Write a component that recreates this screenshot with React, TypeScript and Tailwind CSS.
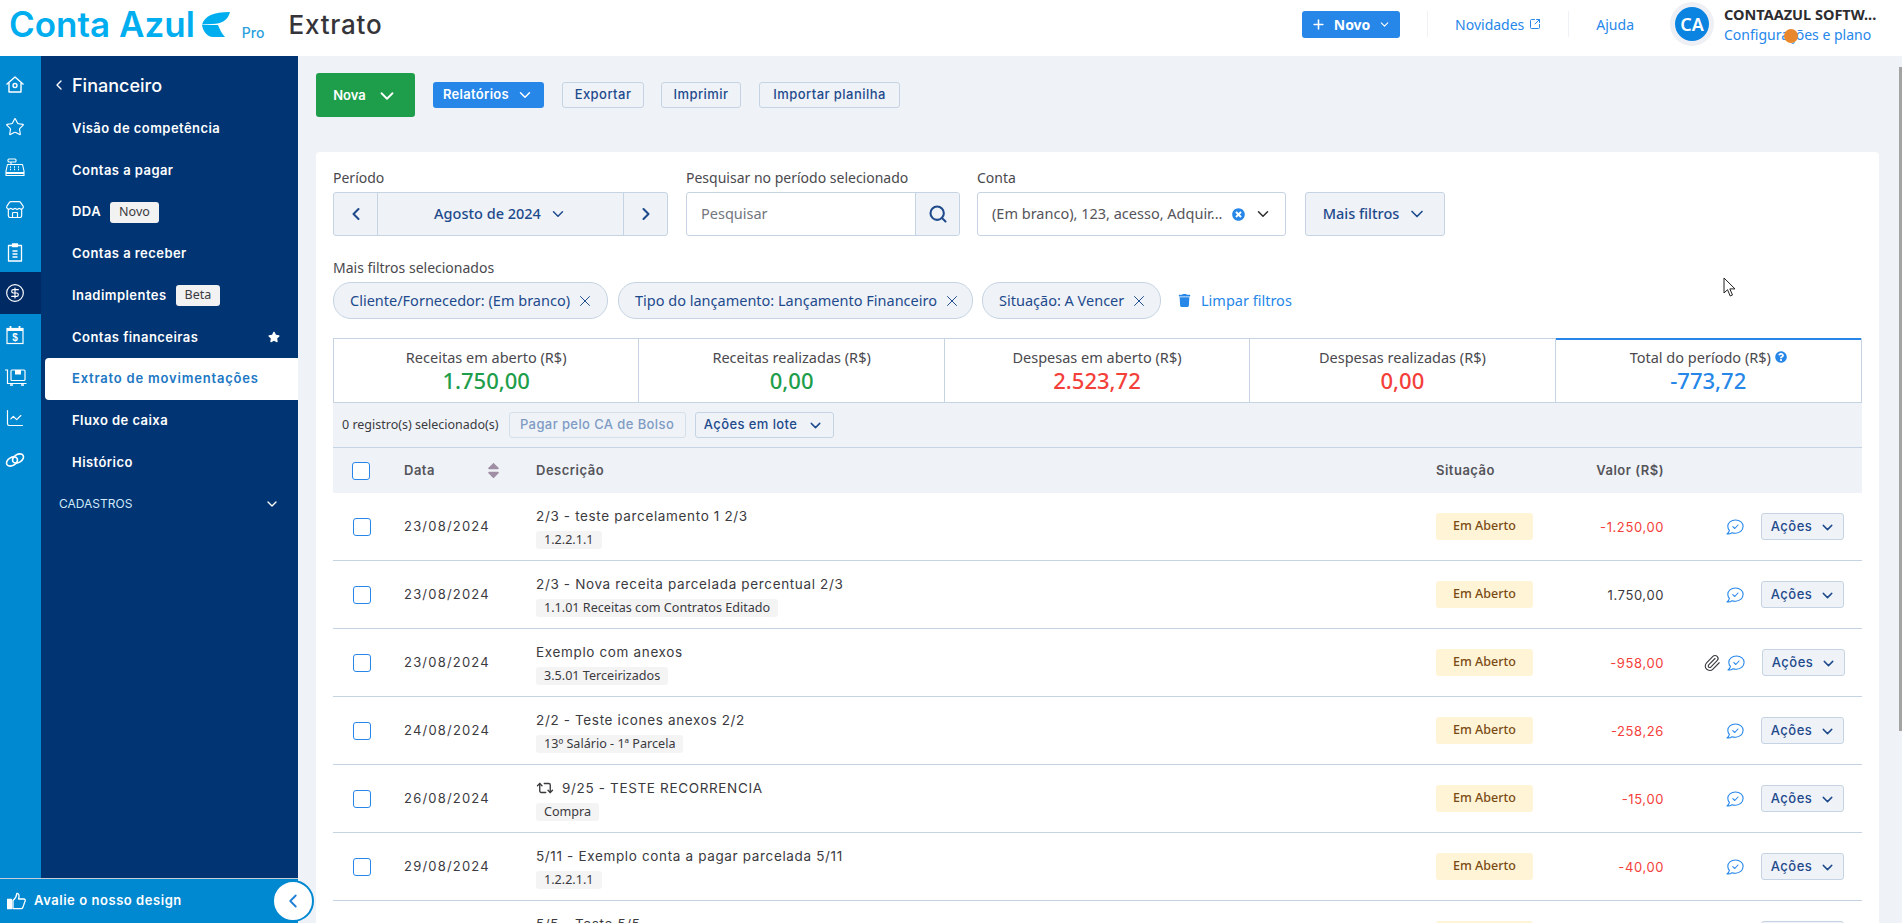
import React from 'react';
import {
  ChevronDown,
  ChevronLeft,
  ChevronRight,
  Search,
  X,
  Plus,
  Paperclip,
  Repeat2,
  SquareArrowOutUpRight,
  Star,
  CircleDollarSign,
  Store,
  ChartLine,
} from 'lucide-react';
import { FaStar, FaTrash, FaQuestionCircle, FaTimesCircle, FaSort } from 'react-icons/fa';

function HomeIcon() {
  return (
    <svg width="20" height="20" viewBox="0 0 20 20" fill="none" stroke="currentColor" strokeWidth="1.4" strokeLinejoin="round">
      <path d="M1.5 9.5 10 2l8.500 7.500" />
      <path d="M4 8v9h12V8" />
      <circle cx="10" cy="10.500" r="2" />
    </svg>
  );
}

function RegisterIcon() {
  return (
    <svg width="20" height="20" viewBox="0 0 20 20" fill="none" stroke="currentColor" strokeWidth="1.100" strokeLinejoin="round">
      <rect x="3" y="1" width="8" height="3" rx="1" />
      <path d="M6 4v2M2.500 6.500h15L19 13v4.500H1V13z" />
      <path d="M1 15h18" strokeWidth="2" />
      <path d="M5 9h1M9 9h1M13 9h1M5 11.500h1M9 11.500h1M13 11.500h1" strokeWidth="1.300" />
    </svg>
  );
}

function ClipboardIcon() {
  return (
    <svg width="20" height="20" viewBox="0 0 20 20" fill="none" stroke="currentColor" strokeWidth="1.300" strokeLinejoin="round">
      <path d="M7 3.500H3.500V19h13V3.500H13" />
      <path d="M7.500 2h5v2.500h-5z" fill="currentColor" />
      <path d="M7.500 9h5M7.500 12h5M7.500 15h5" />
    </svg>
  );
}

function CalendarMoneyIcon() {
  return (
    <svg width="20" height="20" viewBox="0 0 20 20" fill="none" stroke="currentColor" strokeWidth="1.200">
      <rect x="2" y="3.500" width="16" height="15" />
      <path d="M5.500 1v4M14.500 1v4M2 5h16" strokeWidth="1.800" />
      <text x="10" y="16" fontSize="10" fontWeight="700" textAnchor="middle" fill="currentColor" stroke="none" fontFamily="Liberation Sans, sans-serif">$</text>
    </svg>
  );
}

function CartIcon() {
  return (
    <svg width="22" height="20" viewBox="0 0 22 20" fill="none" stroke="currentColor" strokeWidth="1.200">
      <path d="M0 3h2.500v13.500h19" />
      <rect x="6" y="3" width="14" height="10.500" rx="1" />
      <path d="M10 3h6v4.500h-6z" fill="currentColor" stroke="none" />
      <path d="M5 18h3M16 18h3" strokeWidth="1.600" />
    </svg>
  );
}

function LinkIcon() {
  return (
    <svg width="20" height="20" viewBox="0 0 20 20" fill="none" stroke="currentColor" strokeWidth="1.600">
      <ellipse cx="7" cy="11.500" rx="6" ry="4" transform="rotate(-32 7 11.500)" />
      <ellipse cx="13" cy="8.500" rx="6" ry="4" transform="rotate(-32 13 8.500)" />
    </svg>
  );
}

function ThumbIcon() {
  return (
    <svg width="19" height="18" viewBox="0 0 19 18" fill="none" stroke="currentColor" strokeWidth="1.300" strokeLinejoin="round">
      <rect x="0.500" y="7.500" width="4" height="9" fill="currentColor" />
      <path d="M6 8.500c2-1.500 3.500-4 3.800-7 2-.4 2.800 2 1.700 5.500h5.300c1.300 0 1.800 1.300 1.200 2.300l-2.200 6.300c-.3.800-.9 1.100-1.700 1.100H6z" />
    </svg>
  );
}

function ChatCheck() {
  return (
    <svg width="18" height="16" viewBox="0 0 18 16" fill="none" stroke="#2687e9" strokeWidth="1.100" strokeLinejoin="round" strokeLinecap="round">
      <path d="M9.500 1C5 1 1.800 3.800 1.800 7.300c0 1.500.6 2.900 1.600 4-.2 1.400-1 2.700-2.400 3.600 2 .3 3.700-.2 5-1.200 1.100.4 2.300.6 3.500.5 4.400-.1 7.600-3 7.600-6.900C17.100 3.800 13.900 1 9.500 1z" />
      <path d="m6.800 7.600 2 1.900 3.200-3.500" />
    </svg>
  );
}

function Cursor() {
  return (
    <svg width="14" height="20" viewBox="0 0 14 20" className="absolute left-[1723px] top-[277px]">
      <path d="M1 1v15l3.500-3.300 2.700 6.300 2.300-1-2.700-6.100H12z" fill="#fff" stroke="#222" strokeWidth="1" strokeLinejoin="round" />
    </svg>
  );
}

function Sidebar() {
  const rail = [
    { icon: <HomeIcon /> },
    { icon: <Star size={20} strokeWidth={1.4} /> },
    { icon: <RegisterIcon /> },
    { icon: <Store size={20} strokeWidth={1.4} /> },
    { icon: <ClipboardIcon /> },
    { icon: <CircleDollarSign size={20} strokeWidth={1.4} />, active: true },
    { icon: <CalendarMoneyIcon /> },
    { icon: <CartIcon /> },
    { icon: <ChartLine size={20} strokeWidth={1.4} /> },
    { icon: <LinkIcon /> },
  ];

  return (
    <div className="relative flex w-[298px] shrink-0 flex-col">
      <div className="flex min-h-0 flex-1">
        <div className="flex w-[41px] shrink-0 flex-col bg-[#0088d1] pt-[8px] text-white">
          {rail.map((item, i) => (
            <div key={i} className={item.active ? 'flex h-[41.7px] items-center bg-[#002a63] pl-[5px]' : 'flex h-[41.7px] items-center pl-[5px]'}>
              {item.icon}
            </div>
          ))}
        </div>
        <div className="flex-1 bg-[#003473] pl-[4px] font-['Inter',sans-serif] text-[13px] font-semibold tracking-[0.45px] text-white">
          <div className="flex h-[52px] items-center pl-[6px] pt-[6px]">
            <ChevronLeft size={16} strokeWidth={2} />
            <span className="ml-[5px] text-[18px] font-medium tracking-[0px]">Financeiro</span>
          </div>
          <div className="flex h-[41.7px] items-center pl-[27px]">Visão de competência</div>
          <div className="flex h-[41.7px] items-center pl-[27px]">Contas a pagar</div>
          <div className="flex h-[41.7px] items-center pl-[27px]">
            DDA
            <span className="ml-[9px] rounded-[3px] bg-[#f2f2f2] px-[9px] py-[1px] font-['Noto_Sans',sans-serif] text-[12.500px] font-normal tracking-normal text-[#3b3a3e]">Novo</span>
          </div>
          <div className="flex h-[41.7px] items-center pl-[27px]">Contas a receber</div>
          <div className="flex h-[41.7px] items-center pl-[27px]">
            Inadimplentes
            <span className="ml-[9px] rounded-[3px] bg-[#f2f2f2] px-[9px] py-[1px] font-['Noto_Sans',sans-serif] text-[12.500px] font-normal tracking-normal text-[#3b3a3e]">Beta</span>
          </div>
          <div className="flex h-[41.7px] items-center justify-between pl-[27px] pr-[18px]">
            Contas financeiras
            <FaStar size={12} />
          </div>
          <div className="flex h-[41.7px] items-center rounded-l-[4px] bg-white pl-[27px] tracking-[0.8px] text-[#2077c4]">Extrato de movimentações</div>
          <div className="flex h-[41.7px] items-center pl-[27px]">Fluxo de caixa</div>
          <div className="flex h-[41.7px] items-center pl-[27px]">Histórico</div>
          <div className="flex h-[41.7px] items-center justify-between pl-[14px] pr-[18px] text-[12px] font-normal tracking-[0px] text-[#cfe8fa]">
            CADASTROS
            <ChevronDown size={16} className="text-white" />
          </div>
        </div>
      </div>
      <div className="flex h-[45px] shrink-0 items-center gap-[8px] border-t border-[#c9ced6] bg-[#0088d1] pl-[7px] font-['Inter',sans-serif] text-[13px] font-semibold tracking-[0.55px] text-white">
        <ThumbIcon />
        Avalie o nosso design
      </div>
      <div className="absolute bottom-[1px] right-[-16px] flex h-[42px] w-[42px] items-center justify-center rounded-full border-2 border-[#0088d1] bg-white text-[#1f7fd6]">
        <ChevronLeft size={22} strokeWidth={2} />
      </div>
    </div>
  );
}

function Header() {
  return (
    <header className="flex h-14 shrink-0 items-center bg-white pb-[8px] pl-[9px]">
      <span className="font-['Inter',sans-serif] text-[35px] font-semibold leading-none tracking-[0px] text-[#00aeef]">Conta Azul</span>
      <svg width="28" height="25" viewBox="0 0 28 25" fill="#00aeef" className="ml-[7px]">
        <path d="M0 12.500C3 4 11 0 28 0c-2 8-8 12-18 12z" />
        <path d="M0 13h16c2 5 4 9 7 12H11C5 25 1 19 0 13z" />
      </svg>
      <span className="ml-[12px] mt-[17px] font-['Inter',sans-serif] text-[14px] font-medium text-[#2a9fdc]">Pro</span>
      <span className="ml-[24px] font-['Inter',sans-serif] text-[26px] font-medium tracking-[0.8px] text-[#353439]">Extrato</span>
      <div className="ml-auto flex items-center pr-[30px]">
        <button className="flex h-[27px] w-[98px] items-center justify-center gap-[8px] rounded-[3px] bg-[#2687e9] text-[14px] font-bold text-white">
          <Plus size={15} strokeWidth={2.5} />
          Novo
          <ChevronDown size={13} />
        </button>
        <div className="ml-[27px] h-[26px] w-px bg-[#eef1f6]" />
        <span className="ml-[27px] text-[14px] text-[#2687e9]">Novidades</span>
        <SquareArrowOutUpRight size={12} strokeWidth={2} className="ml-[5px] text-[#2687e9]" />
        <div className="ml-[27px] h-[26px] w-px bg-[#eef1f6]" />
        <span className="ml-[27px] text-[14px] text-[#2687e9]">Ajuda</span>
        <div className="ml-[36px] flex h-[44px] w-[44px] items-center justify-center rounded-full bg-[#eef0f5]">
          <div className="flex h-[34px] w-[34px] items-center justify-center rounded-full bg-[#0a84e0] text-[18px] font-semibold text-white">CA</div>
        </div>
        <div className="relative ml-[10px] flex w-[148px] flex-col gap-[5px] leading-[16px]">
          <span className="whitespace-nowrap text-[14.500px] font-bold text-[#2d2c30]">CONTAAZUL SOFTW...</span>
          <span className="whitespace-nowrap text-[14px] text-[#2687e9]">Configurações e plano</span>
          <span className="absolute left-[60px] top-[23px] h-[14px] w-[14px] rounded-full bg-[#e8872b]" />
        </div>
      </div>
    </header>
  );
}

function Toolbar() {
  const outline = "flex h-[26px] items-center rounded-[3px] border border-[#c5d3e2] bg-[#eff3f8] font-['Inter',sans-serif] text-[13px] font-medium tracking-[0.45px] text-[#1e4a8c]";
  return (
    <div className="flex h-[44px] items-center">
      <button className="mr-[18px] flex h-[44px] w-[99px] items-center justify-center gap-[10px] rounded-[3px] bg-[#1e9e4a] pt-[1px] font-['Inter',sans-serif] text-[13px] font-semibold text-white">
        Nova
        <ChevronDown size={22} strokeWidth={2} />
      </button>
      <button className="mr-[18px] flex h-[26px] w-[111px] items-center justify-center gap-[7px] rounded-[3px] bg-[#2687e9] font-['Inter',sans-serif] text-[13px] font-semibold tracking-[0.3px] text-white">
        Relatórios
        <ChevronDown size={18} />
      </button>
      <button className={outline + ' mr-[17px] w-[82px] justify-center'}>Exportar</button>
      <button className={outline + ' mr-[18px] w-[80px] justify-center'}>Imprimir</button>
      <button className={outline + ' w-[141px] justify-center'}>Importar planilha</button>
    </div>
  );
}

function Filters() {
  const chip = 'flex h-[37px] items-center gap-[6px] rounded-[18px] border border-[#c5d3e2] bg-[#eff3f8] text-[14.500px] text-[#1e4a8c]';
  return (
    <>
      <div className="flex items-end">
        <div className="mr-[18px] w-[335px]">
          <div className="mb-[6px] text-[14px] leading-[16px] text-[#4a494e]">Período</div>
          <div className="flex h-[44px] items-center rounded-[3px] border border-[#c5d3e2] bg-[#eff3f8] text-[#1e4a8c]">
            <div className="flex h-full w-[44px] items-center justify-center border-r border-[#c5d3e2]">
              <ChevronLeft size={20} strokeWidth={2.5} />
            </div>
            <div className="flex flex-1 items-center justify-center gap-[8px] text-[14.500px] font-medium">
              Agosto de 2024
              <ChevronDown size={18} strokeWidth={2} />
            </div>
            <div className="flex h-full w-[44px] items-center justify-center border-l border-[#c5d3e2]">
              <ChevronRight size={20} strokeWidth={2.5} />
            </div>
          </div>
        </div>
        <div className="mr-[17px] w-[274px]">
          <div className="mb-[6px] text-[14px] leading-[16px] text-[#4a494e]">Pesquisar no período selecionado</div>
          <div className="flex h-[44px] items-center rounded-[3px] border border-[#c5d3e2] bg-white">
            <span className="flex-1 pl-[14px] text-[14.500px] text-[#73767e]">Pesquisar</span>
            <div className="flex h-full w-[44px] items-center justify-center rounded-r-[3px] border-l border-[#c5d3e2] bg-[#eff3f8] text-[#1e4a8c]">
              <Search size={20} strokeWidth={2.5} />
            </div>
          </div>
        </div>
        <div className="mr-[19px] w-[309px]">
          <div className="mb-[6px] text-[14px] leading-[16px] text-[#4a494e]">Conta</div>
          <div className="flex h-[44px] items-center rounded-[3px] border border-[#c5d3e2] bg-white pl-[14px] pr-[13px]">
            <span className="flex-1 whitespace-nowrap text-[14.500px] text-[#55545a]">(Em branco), 123, acesso, Adquir...</span>
            <FaTimesCircle size={13} className="mr-[9px] text-[#2687e9]" />
            <ChevronDown size={18} strokeWidth={2} className="text-[#2d2c30]" />
          </div>
        </div>
        <button className="flex h-[44px] w-[140px] items-center justify-center gap-[8px] rounded-[3px] border border-[#c5d3e2] bg-[#eff3f8] text-[14.500px] font-medium text-[#1e4a8c]">
          Mais filtros
          <ChevronDown size={20} strokeWidth={2} />
        </button>
      </div>
      <div className="mb-[6px] mt-[24px] text-[14px] leading-[16px] text-[#4a494e]">Mais filtros selecionados</div>
      <div className="flex items-center">
        <div className={chip + ' mr-[10px] w-[275px] pl-[16px]'}>
          Cliente/Fornecedor: (Em branco)
          <X size={18} strokeWidth={1.3} />
        </div>
        <div className={chip + ' mr-[9px] w-[355px] pl-[16px]'}>
          Tipo do lançamento: Lançamento Financeiro
          <X size={18} strokeWidth={1.3} />
        </div>
        <div className={chip + ' mr-[17px] w-[179px] pl-[16px]'}>
          Situação: A Vencer
          <X size={18} strokeWidth={1.3} />
        </div>
        <FaTrash size={13} className="mr-[10px] text-[#2687e9]" />
        <span className="text-[14.500px] text-[#2687e9]">Limpar filtros</span>
      </div>
    </>
  );
}

function Summary() {
  const cells = [
    { label: 'Receitas em aberto (R$)', value: '1.750,00', color: 'text-[#1e9e4a]' },
    { label: 'Receitas realizadas (R$)', value: '0,00', color: 'text-[#1e9e4a]' },
    { label: 'Despesas em aberto (R$)', value: '2.523,72', color: 'text-[#f4403a]' },
    { label: 'Despesas realizadas (R$)', value: '0,00', color: 'text-[#f4403a]' },
  ];
  return (
    <div className="mt-[19px] grid h-[65px] grid-cols-5 border-b border-l border-r border-t border-[#c5d3e2]">
      {cells.map((c) => (
        <div key={c.label} className="flex flex-col items-center justify-center border-r border-[#c5d3e2]">
          <span className="text-[14.500px] leading-[18px] text-[#4a494e]">{c.label}</span>
          <span className={'text-[22px] font-medium leading-[28px] ' + c.color}>{c.value}</span>
        </div>
      ))}
      <div className="mt-[-1px] flex flex-col items-center justify-center border-t-2 border-[#2687e9]">
        <span className="flex items-center gap-[4px] text-[14.500px] leading-[18px] text-[#4a494e]">
          Total do período (R$)
          <FaQuestionCircle size={12} className="text-[#2687e9]" />
        </span>
        <span className="text-[22px] font-medium leading-[28px] text-[#2687e9]">-773,72</span>
      </div>
    </div>
  );
}

function CheckBox() {
  return <div className="h-[18px] w-[18px] rounded-[3px] border border-[#2687e9] bg-white" />;
}

function TableTop() {
  return (
    <>
      <div className="flex h-[45px] items-center border-b border-[#c5d3e2] bg-[#eff3f8] pl-[9px]">
        <span className="text-[12.500px] text-[#3b3a3e]">0 registro(s) selecionado(s)</span>
        <button className="ml-[10px] flex h-[26px] w-[177px] items-center justify-center rounded-[3px] border border-[#d5dfea] font-['Inter',sans-serif] text-[13px] font-medium tracking-[0.4px] text-[#7f9bc4]">
          Pagar pelo CA de Bolso
        </button>
        <button className="ml-[9px] flex h-[26px] w-[139px] items-center justify-center gap-[10px] rounded-[3px] border border-[#c5d3e2] font-['Inter',sans-serif] text-[13px] font-medium tracking-[0.4px] text-[#1e4a8c]">
          Ações em lote
          <ChevronDown size={17} strokeWidth={2} />
        </button>
      </div>
      <div className="flex h-[45px] items-center bg-[#eff3f8] font-['Inter',sans-serif] text-[13px] font-semibold tracking-[0.5px] text-[#55545a]">
        <div className="w-[71px] pl-[19px]">
          <CheckBox />
        </div>
        <div className="flex w-[132px] items-center">
          <span className="w-[80px]">Data</span>
          <FaSort size={19} className="text-[#a08ea4]" />
        </div>
        <div className="w-[900px]">Descrição</div>
        <div className="w-[132px]">Situação</div>
        <div className="w-[96px] text-right">Valor (R$)</div>
      </div>
    </>
  );
}

type RowData = {
  date: string;
  desc: string;
  tag: string;
  value: string;
  positive?: boolean;
  clip?: boolean;
  recurring?: boolean;
};

const rows: RowData[] = [
  { date: '23/08/2024', desc: '2/3 - teste parcelamento 1 2/3', tag: '1.2.2.1.1', value: '-1.250,00' },
  { date: '23/08/2024', desc: '2/3 - Nova receita parcelada percentual 2/3', tag: '1.1.01 Receitas com Contratos Editado', value: '1.750,00', positive: true },
  { date: '23/08/2024', desc: 'Exemplo com anexos', tag: '3.5.01 Terceirizados', value: '-958,00', clip: true },
  { date: '24/08/2024', desc: '2/2 - Teste icones anexos 2/2', tag: '13º Salário - 1ª Parcela', value: '-258,26' },
  { date: '26/08/2024', desc: '9/25 - TESTE RECORRENCIA', tag: 'Compra', value: '-15,00', recurring: true },
  { date: '29/08/2024', desc: '5/11 - Exemplo conta a pagar parcelada 5/11', tag: '1.2.2.1.1', value: '-40,00' },
  { date: '31/08/2024', desc: '5/5 - Teste 5/5', tag: '1.2.2.1.1', value: '-1,46' },
];

function Row({ row }: { row: RowData }) {
  return (
    <div className="flex h-[68px] items-center border-b border-[#c5d3e2] bg-white">
      <div className="w-[71px] pl-[20px]">
        <CheckBox />
      </div>
      <div className="w-[132px] pt-[1px] font-['Inter',sans-serif] text-[13px] tracking-[1.2px] text-[#3b3a3e]">{row.date}</div>
      <div className="w-[900px] pt-[3px]">
        <div className="flex h-[18px] items-center font-['Inter',sans-serif] text-[13.500px] tracking-[0.65px] text-[#3b3a3e]">
          {row.recurring && <Repeat2 size={18} strokeWidth={1.8} className="mr-[8px]" />}
          {row.desc}
        </div>
        <span className="mt-[6px] inline-block rounded-[3px] bg-[#f4f4f5] px-[8px] align-top text-[12.600px] leading-[18px] text-[#3b3a3e]">{row.tag}</span>
      </div>
      <div className="w-[132px]">
        <span className="flex h-[27px] w-[97px] items-center justify-center rounded-[3px] bg-[#fff5d6] text-[12.500px] font-medium text-[#7a4a14]">Em Aberto</span>
      </div>
      <div className={"w-[96px] pt-[2px] text-right font-['Inter',sans-serif] text-[13px] tracking-[0.6px] " + (row.positive ? 'text-[#3b3a3e]' : 'text-[#f4403a]')}>{row.value}</div>
      <div className="flex flex-1 items-center justify-end pr-[18px]">
        {row.clip && <Paperclip size={18} strokeWidth={1.5} className="mr-[6px] text-[#3b3a3e]" />}
        <ChatCheck />
        <button className={"ml-[17px] flex h-[27px] w-[83px] items-center justify-center gap-[7px] rounded-[3px] border border-[#c5d3e2] bg-[#eff3f8] pl-[2px] pt-[1px] font-['Inter',sans-serif] text-[13px] font-medium tracking-[0.5px] text-[#1e4a8c] " + (row.clip ? 'mr-[-1px]' : '')}>
          Ações
          <ChevronDown size={17} strokeWidth={2} />
        </button>
      </div>
    </div>
  );
}

export default function App() {
  return (
    <div className="relative flex h-screen flex-col overflow-hidden bg-[#eff3f8] font-['Noto_Sans',sans-serif] text-[#3b3a3e]">
      <Header />
      <div className="flex min-h-0 flex-1">
        <Sidebar />
        <main className="min-w-0 flex-1 overflow-hidden pl-[18px] pr-[23px] pt-[17px]">
          <Toolbar />
          <div className="mt-[35px] rounded-t-[4px] bg-white px-[17px] pt-[18px]">
            <Filters />
            <Summary />
            <TableTop />
            {rows.map((row, i) => (
              <Row key={i} row={row} />
            ))}
          </div>
        </main>
      </div>
      <div className="absolute right-0 top-[67px] h-[664px] w-[3px] bg-[#a3a3a3]" />
      <Cursor />
    </div>
  );
}
